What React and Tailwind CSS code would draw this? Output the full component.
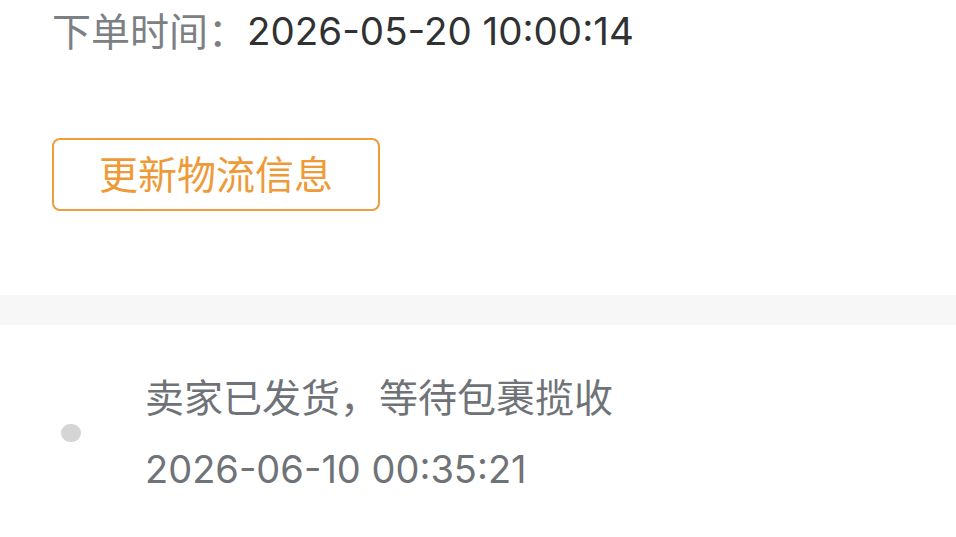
import React from 'react';

const App = () => {
  return (
    <div className="min-h-[537px] bg-white font-['Inter','Noto_Sans_CJK_SC',sans-serif]">
      <div className="px-[52px]">
        <div className="flex h-[62px] items-center leading-none">
          <span className="text-[39px] text-[#7c8085]">下单时间：</span>
          <span className="text-[38.5px] text-[#2f3133]">2026-05-20 10:00:14</span>
        </div>
        <div className="h-[233px] pt-[76px]">
          <button className="flex h-[73px] w-[328px] items-center justify-center rounded-[8px] border-2 border-[#ee9c3c] text-[39px] leading-none text-[#ee9a38]">
            更新物流信息
          </button>
        </div>
      </div>

      <div className="h-[30px] bg-[#f7f7f7]" />

      <div className="flex items-center pt-[53px] pb-[40px]">
        <div className="ml-[61px] h-[18px] w-[20px] rounded-full bg-[#d5d5d5]" />
        <div className="ml-[64px] flex flex-col gap-[33px] leading-none text-[#6f7378]">
          <span className="text-[39px]">卖家已发货，等待包裹揽收</span>
          <span className="text-[38px]">2026-06-10 00:35:21</span>
        </div>
      </div>
    </div>
  );
};

export default App;
